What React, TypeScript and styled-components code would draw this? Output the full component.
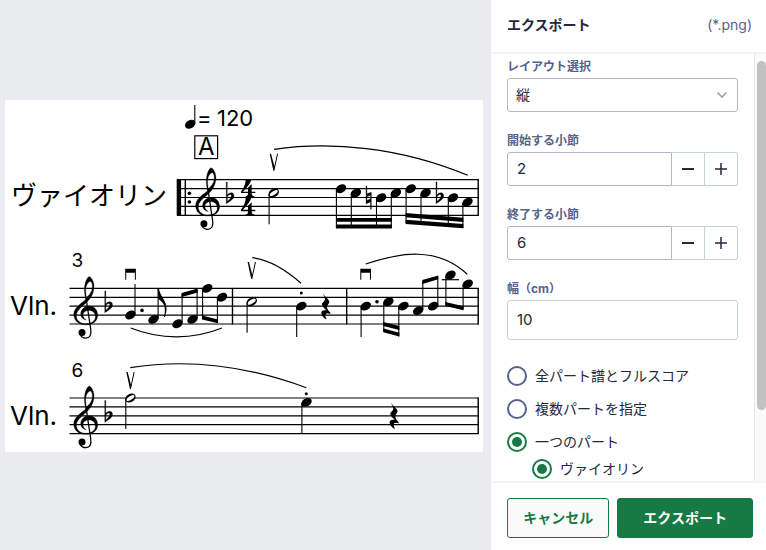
import React, { useState } from "react";
import styled, { createGlobalStyle } from "styled-components";

const color = {
  ink: "#25273d",
  muted: "#56628a",
  border: "#b4b6c6",
  borderSoft: "#c6d2d8",
  rule: "#f5f5f6",
  canvas: "#ebecf0",
  green: "#177a45",
};

const GlobalStyle = createGlobalStyle`
  *, *::before, *::after { box-sizing: border-box; }
  body { margin: 0; }
  body, input, select, button {
    font-family: Inter, "Noto Sans CJK JP", sans-serif;
    font-size: 14px;
    color: ${color.ink};
  }
`;

const Shell = styled.div`
  display: flex;
  height: 100vh;
  background: ${color.canvas};
`;

const Preview = styled.main`
  flex: 1;
  min-width: 0;
  display: flex;
  align-items: center;
  padding: 2px 8px 0 5px;
`;

const Sheet = styled.svg`
  display: block;
  width: 100%;
  background: #fff;
`;

const ScoreText = styled.text<{ $size: number }>`
  font-family: Inter, "Noto Sans CJK JP", sans-serif;
  font-size: ${(p) => p.$size}px;
  fill: #000;
`;

const Panel = styled.form`
  width: 275px;
  flex: none;
  display: flex;
  flex-direction: column;
  background: #fff;
`;

const Header = styled.header`
  display: flex;
  align-items: center;
  justify-content: space-between;
  height: 54px;
  padding: 0 14px 2px 16px;
  border-bottom: 2px solid ${color.rule};
`;

const Title = styled.h1`
  margin: 0;
  font-size: 14px;
  line-height: 20px;
  font-weight: 700;
`;

const Format = styled.span`
  line-height: 20px;
  color: ${color.muted};
`;

const Middle = styled.div`
  flex: 1;
  min-height: 0;
  display: flex;
`;

const Fields = styled.div`
  flex: 1;
  min-width: 0;
  overflow: hidden;
  padding: 5px 16px 0;
`;

const ScrollTrack = styled.div`
  width: 12px;
  padding: 7px 0 0 2px;
  border-left: 1px solid #e8e8e8;
  background: #fafafa;
`;

const ScrollThumb = styled.div`
  height: 83%;
  border-radius: 5px;
  background: #c1c1c1;
`;

const Field = styled.div`
  display: flex;
  flex-direction: column;
  gap: 3px;
  margin-bottom: 21px;
`;

const Label = styled.label`
  font-size: 12px;
  line-height: 16px;
  font-weight: 700;
  color: ${color.muted};
`;

const SelectBox = styled.div`
  display: grid;
  align-items: center;
  & > * { grid-area: 1 / 1; }
  & > svg { justify-self: end; margin-right: 10px; pointer-events: none; }
`;

const Select = styled.select`
  appearance: none;
  height: 34px;
  padding: 0 8px 2px;
  border: 1px solid ${color.border};
  border-radius: 3px;
  background: #fff;
`;

const Stepper = styled.div`
  display: flex;
  height: 34px;
`;

const TextInput = styled.input<{ $joined?: boolean }>`
  flex: 1;
  min-width: 0;
  min-height: ${(p) => (p.$joined ? 34 : 40)}px;
  padding: 0 9px 2px;
  font-size: 15px;
  border: 1px solid ${(p) => (p.$joined ? color.border : color.borderSoft)};
  border-radius: ${(p) => (p.$joined ? "3px 0 0 3px" : "3px")};
  background: #fff;
`;

const StepButton = styled.button`
  display: grid;
  place-items: center;
  width: 33px;
  padding: 0;
  border: 1px solid ${color.borderSoft};
  border-left: 0;
  background: #fff;
  &:last-child { border-radius: 0 3px 3px 0; }
`;

const Choices = styled.div`
  display: flex;
  flex-direction: column;
  gap: 13px;
  padding-top: 5px;
`;

const ChoiceGroup = styled.div`
  display: flex;
  flex-direction: column;
  gap: 7px;
`;

const Choice = styled.label<{ $nested?: boolean }>`
  display: flex;
  align-items: center;
  gap: 8px;
  height: 20px;
  line-height: 20px;
  margin-left: ${(p) => (p.$nested ? 25 : 0)}px;
`;

const Radio = styled.input`
  appearance: none;
  display: grid;
  place-items: center;
  width: 20px;
  height: 20px;
  margin: 0;
  border: 2px solid ${color.muted};
  border-radius: 50%;
  background: #fff;
  &:checked { border-color: ${color.green}; }
  &:checked::before {
    content: "";
    width: 10px;
    height: 10px;
    border-radius: 50%;
    background: ${color.green};
  }
`;

const Footer = styled.footer`
  display: flex;
  gap: 8px;
  padding: 15px 13px 12px 16px;
  border-top: 2px solid ${color.rule};
`;

const Action = styled.button<{ $primary?: boolean }>`
  flex: ${(p) => (p.$primary ? 4 : 3)} 1 0;
  height: 40px;
  padding: 0 0 2px;
  font-weight: 700;
  border: 1px solid ${color.green};
  border-radius: 3px;
  color: ${(p) => (p.$primary ? "#fff" : color.green)};
  background: ${(p) => (p.$primary ? color.green : "#fafafa")};
`;

type Point = [number, number];

const Staff = ({ x, y, bars }: { x: number; y: number; bars: number[] }) => (
  <g stroke="#000" strokeWidth={1.2}>
    {[0, 1, 2, 3, 4].map((i) => (
      <line key={i} x1={x} x2={478.8} y1={y + i * 8.9} y2={y + i * 8.9} />
    ))}
    {bars.map((b) => (
      <line key={b} x1={b} x2={b} y1={y - 0.5} y2={y + 36.1} strokeWidth={1.4} />
    ))}
  </g>
);

/* Glyphs are drawn on a grid three times finer than the score. */
const Glyph = ({ at, children }: { at: Point; children: React.ReactNode }) => (
  <g transform={`translate(${at[0]} ${at[1]}) scale(.3333)`}>{children}</g>
);

/* Origin: left edge of the clef on the G line. */
const TrebleClef = ({ at }: { at: Point }) => (
  <Glyph at={at}>
    <path
      fillRule="evenodd"
      stroke="#000"
      strokeWidth={0.8}
      d="M36 -47C32 -64 30 -82 35 -98C38 -108 43 -116 47 -116C53 -114 61 -101 61 -86C61 -65 51 -51 39 -38C25 -25 9 -15 8 1C8 16 20 26 37 26C54 26 65 17 65 5C65 -7 57 -14 46 -14C35 -14 28 -8 28 0C28 7 32 12 38 15C28 14 21 6 21 -3C21 -17 33 -27 47 -27C62 -27 72 -15 72 1C72 19 56 29 36 29C14 29 0 16 0 -3C0 -21 20 -34 36 -47ZM38 -53C48 -61 56 -71 56 -86C56 -93 54 -99 51 -101C44 -102 37 -91 36 -76C36 -68 37 -59 38 -53Z"
    />
    <path d="M37 -52L51 42C54 60 48 68 37 69C30 69 22 66 19 57" fill="none" stroke="#000" strokeWidth={3.8} />
    <circle cx={25} cy={52} r={10.5} />
  </Glyph>
);

/* Origin: top of the stem. */
const Flat = ({ at }: { at: Point }) => (
  <Glyph at={at}>
    <path
      fillRule="evenodd"
      stroke="#000"
      strokeWidth={1}
      d="M0 0H3L2.5 39C9 30 23 29 23 41C23 52 11 57 0 65ZM3 45V58C10 52 15 47 15 41C15 35 6 36 3 45Z"
    />
  </Glyph>
);

const Natural = ({ at }: { at: Point }) => (
  <Glyph at={at}>
    <path
      fillRule="evenodd"
      stroke="#000"
      strokeWidth={1}
      d="M0 0H2.5V23L16 19V70H13.5V48L0 53ZM2.5 32V43L13.5 39V28Z"
    />
  </Glyph>
);

const Four = ({ at }: { at: Point }) => (
  <Glyph at={at}>
    <path d="M14 0H31C27 14 15 28 5 37H21V25L32 14V37H43V41H32C32 47 34 50 40 51V54H14V51C20 50 21 47 21 41H0V37C8 26 14 14 14 0Z" />
  </Glyph>
);

const QuarterRest = ({ at }: { at: Point }) => (
  <Glyph at={at}>
    <path d="M4 0C8 8 24 20 24 26C24 32 17 36 17 42C17 48 22 54 28 60L26 63C20 59 12 61 12 67C12 71 14 75 16 78L14 79C6 74 0 66 0 60C0 53 8 50 16 53C10 47 2 40 2 34C2 28 11 26 11 18C11 12 6 6 4 0Z" />
  </Glyph>
);

const UpBow = ({ at }: { at: Point }) => (
  <Glyph at={at}>
    <path d="M0 0H4L14 38L22 0H25L14 51H11Z" />
  </Glyph>
);

const DownBow = ({ at }: { at: Point }) => (
  <Glyph at={at}>
    <path d="M0 0H32V33H29V12H3V33H0Z" />
  </Glyph>
);

/* A note whose stem runs to `stem`: upwards on the right, downwards on the left. */
const Note = ({ at: [x, y], stem, half }: { at: Point; stem: number; half?: boolean }) => {
  const up = stem < y;
  const sx = up ? x + 4.6 : x - 4.6;
  return (
    <g>
      <ellipse cx={x} cy={y} rx={5.6} ry={4} transform={`rotate(-30 ${x} ${y})`} />
      {half && <ellipse cx={x} cy={y} rx={4.6} ry={1.9} fill="#fff" transform={`rotate(-33 ${x} ${y})`} />}
      <line x1={sx} x2={sx} y1={up ? y - 1 : y + 1} y2={stem} stroke="#000" strokeWidth={1.1} />
    </g>
  );
};

const Beam = ({ from, to, h = 3.9 }: { from: Point; to: Point; h?: number }) => (
  <path d={`M${from[0]} ${from[1]}L${to[0]} ${to[1]}v${h}L${from[0]} ${from[1] + h}Z`} />
);

const Slur = ({ d }: { d: string }) => <path d={d} fill="none" stroke="#000" strokeWidth={1.2} />;

const Dot = ({ at, r = 1.8 }: { at: Point; r?: number }) => <circle cx={at[0]} cy={at[1]} r={r} />;

const Score = () => (
  <Sheet viewBox="5 100 478 352" role="img" aria-label="ヴァイオリン">
    {/* Tempo, rehearsal mark and first system */}
    <Note at={[190.2, 124.2]} stem={105} />
    <ScoreText x={197} y={126} $size={22}>=</ScoreText>
    <ScoreText x={217} y={126} $size={22}>120</ScoreText>
    <rect x={194.8} y={135.8} width={22.8} height={22.8} fill="none" stroke="#000" strokeWidth={1.2} />
    <ScoreText x={206.2} y={155} $size={24} textAnchor="middle">A</ScoreText>
    <ScoreText x={11} y={205} $size={26}>ヴァイオリン</ScoreText>
    <Staff x={177} y={179.7} bars={[185.3, 478.2]} />
    <rect x={176.7} y={179.2} width={4.4} height={36.6} />
    <Dot at={[189.4, 193.3]} />
    <Dot at={[189.4, 202]} />
    <TrebleClef at={[195.6, 206.4]} />
    <Flat at={[226.3, 182]} />
    <Four at={[241, 179.4]} />
    <Four at={[241, 197.5]} />
    <UpBow at={[269.7, 153.7]} />
    <Slur d="M274 149.3C330 141 400 147 467.7 175.3" />
    <Note at={[273.7, 193]} stem={224.3} half />
    <Note at={[341, 188.7]} stem={228} />
    <Note at={[355.9, 193]} stem={228} />
    <Natural at={[366, 186]} />
    <Note at={[381.1, 197.7]} stem={228} />
    <Note at={[395.9, 193]} stem={228} />
    <Beam from={[336, 217.9]} to={[391.8, 217.9]} />
    <Beam from={[336, 224.5]} to={[391.8, 224.5]} />
    <Note at={[410.7, 188.7]} stem={223} />
    <Note at={[425.6, 193]} stem={225} />
    <Flat at={[436, 182]} />
    <Note at={[452.9, 197.7]} stem={227} />
    <Note at={[467.5, 202.1]} stem={228} />
    <Beam from={[405.6, 213]} to={[463.3, 217.7]} h={4.3} />
    <Beam from={[405.6, 219.7]} to={[463.3, 224]} h={4.3} />

    {/* Second system */}
    <ScoreText x={71.5} y={266.7} $size={19}>3</ScoreText>
    <ScoreText x={10} y={314.7} $size={26}>Vln.</ScoreText>
    <Staff x={69.5} y={288.4} bars={[232.5, 346.7, 478.2]} />
    <TrebleClef at={[73.7, 315.1]} />
    <Flat at={[104.8, 291]} />
    <DownBow at={[125.2, 268.7]} />
    <Note at={[130.4, 315]} stem={284} />
    <Dot at={[142, 310.4]} />
    <Note at={[153.5, 319.4]} stem={288.5} />
    <path d="M157.7 288.5H159C159.6 296 167.5 301 166.5 310.5L165 317H164C166 308 165 303.5 158.5 299Z" />
    <Note at={[177.5, 323.7]} stem={294} />
    <Note at={[192.5, 319.4]} stem={290} />
    <Beam from={[181.6, 293]} to={[197.7, 288.6]} />
    <Note at={[207.2, 288.4]} stem={319} />
    <Note at={[222, 297.3]} stem={323} />
    <Beam from={[202, 315.6]} to={[218, 319.4]} />
    <Slur d="M130.7 328C160 339.7 193 339.7 222 328" />
    <UpBow at={[247.6, 262]} />
    <Slur d="M252.3 257.7C270 260 287 271 301 283.3" />
    <Note at={[251.7, 301.7]} stem={332.7} half />
    <Dot at={[301.3, 293]} r={1.5} />
    <Note at={[301.3, 306.1]} stem={337} />
    <QuarterRest at={[321.3, 293]} />
    <DownBow at={[360.3, 268.7]} />
    <Slur d="M365.7 264C400 252.5 437 246 467.3 274.3" />
    <Note at={[365.7, 306.1]} stem={337} />
    <Dot at={[377, 301.7]} />
    <Note at={[388.4, 301.7]} stem={332} />
    <Note at={[403.4, 306.1]} stem={336.5} />
    <Beam from={[383.3, 322]} to={[399.3, 326]} />
    <Beam from={[383.3, 328.4]} to={[399.3, 332.7]} />
    <Note at={[418.2, 310.6]} stem={281} />
    <Note at={[433.2, 306.1]} stem={277} />
    <Beam from={[422.3, 280]} to={[438.3, 275.4]} />
    <line x1={441.7} x2={459} y1={279.7} y2={279.7} stroke="#000" strokeWidth={1.2} />
    <Note at={[450.5, 275]} stem={305} />
    <Note at={[467.7, 284]} stem={309} />
    <Beam from={[445.4, 302]} to={[463.6, 306.3]} />

    {/* Third system */}
    <ScoreText x={71.5} y={377} $size={19}>6</ScoreText>
    <ScoreText x={10} y={424.7} $size={26}>Vln.</ScoreText>
    <Staff x={69.5} y={398} bars={[478.2]} />
    <TrebleClef at={[73.7, 424.7]} />
    <Flat at={[104.8, 400.6]} />
    <UpBow at={[126.3, 372]} />
    <Slur d="M130.3 367.7C190 358 250 367 306.3 387.7" />
    <Note at={[130.4, 398]} stem={429} half />
    <Dot at={[306.3, 393.7]} r={1.5} />
    <Note at={[306.5, 402.4]} stem={433.7} />
    <QuarterRest at={[389.6, 402.4]} />
  </Sheet>
);

const StepperField = ({ id, label, initial }: { id: string; label: string; initial: number }) => {
  const [value, setValue] = useState(initial);
  return (
    <Field>
      <Label htmlFor={id}>{label}</Label>
      <Stepper>
        <TextInput
          id={id}
          $joined
          inputMode="numeric"
          value={value}
          onChange={(e) => setValue(Number(e.target.value) || 0)}
        />
        <StepButton type="button" aria-label="−" onClick={() => setValue(value - 1)}>
          <svg width="12" height="12" stroke={color.ink} strokeWidth="2">
            <path d="M0 6H12" />
          </svg>
        </StepButton>
        <StepButton type="button" aria-label="+" onClick={() => setValue(value + 1)}>
          <svg width="12" height="12" stroke={color.ink} strokeWidth="1.5">
            <path d="M0 6H12M6 0V12" />
          </svg>
        </StepButton>
      </Stepper>
    </Field>
  );
};

export default function App() {
  const [scope, setScope] = useState("single");
  const radio = (value: string) => (
    <Radio type="radio" name="scope" checked={scope === value} onChange={() => setScope(value)} />
  );
  return (
    <>
      <GlobalStyle />
      <Shell>
        <Preview>
          <Score />
        </Preview>
        <Panel onSubmit={(e) => e.preventDefault()}>
          <Header>
            <Title>エクスポート</Title>
            <Format>(*.png)</Format>
          </Header>
          <Middle>
            <Fields>
              <Field>
                <Label htmlFor="layout">レイアウト選択</Label>
                <SelectBox>
                  <Select id="layout">
                    <option>縦</option>
                  </Select>
                  <svg width="12" height="8" fill="none" stroke="#98a2b8" strokeWidth="1.6">
                    <path d="M1.5 1.5L6 6L10.5 1.5" />
                  </svg>
                </SelectBox>
              </Field>
              <StepperField id="first" label="開始する小節" initial={2} />
              <StepperField id="last" label="終了する小節" initial={6} />
              <Field>
                <Label htmlFor="width">幅（cm）</Label>
                <TextInput id="width" inputMode="decimal" defaultValue="10" />
              </Field>
              <Choices>
                <Choice>{radio("all")}全パート譜とフルスコア</Choice>
                <Choice>{radio("several")}複数パートを指定</Choice>
                <ChoiceGroup>
                  <Choice>{radio("single")}一つのパート</Choice>
                  <Choice $nested>
                    <Radio type="radio" name="part" defaultChecked />
                    ヴァイオリン
                  </Choice>
                </ChoiceGroup>
              </Choices>
            </Fields>
            <ScrollTrack>
              <ScrollThumb />
            </ScrollTrack>
          </Middle>
          <Footer>
            <Action type="button">キャンセル</Action>
            <Action type="submit" $primary>エクスポート</Action>
          </Footer>
        </Panel>
      </Shell>
    </>
  );
}
